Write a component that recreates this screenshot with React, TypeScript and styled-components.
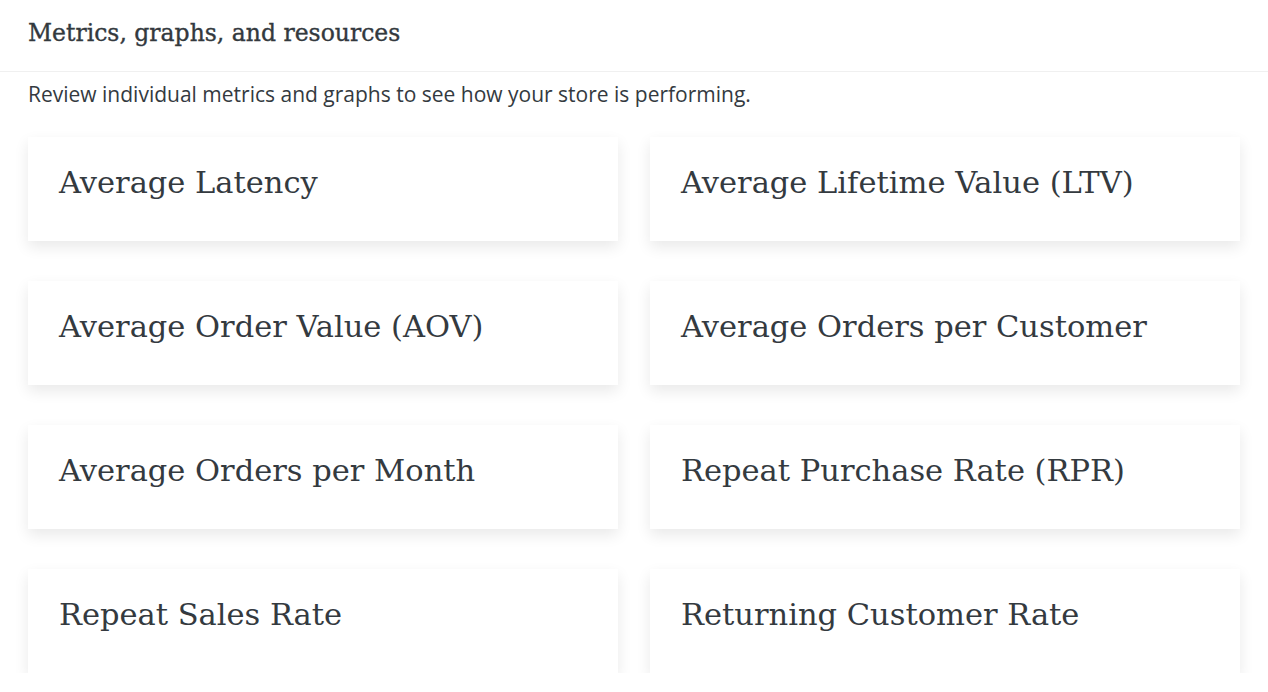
import styled, { createGlobalStyle } from 'styled-components'

const metrics = [
	'Average Latency',
	'Average Lifetime Value (LTV)',
	'Average Order Value (AOV)',
	'Average Orders per Customer',
	'Average Orders per Month',
	'Repeat Purchase Rate (RPR)',
	'Repeat Sales Rate',
	'Returning Customer Rate',
]

export default function App() {
	return (
		<>
			<GlobalStyle />
			<Page>
				<Header>
					<Title>Metrics, graphs, and resources</Title>
				</Header>
				<Content>
					<Intro>Review individual metrics and graphs to see how your store is performing.</Intro>
					<Grid>
						{metrics.map((m) => (
							<Card key={m}>
								<CardTitle>{m}</CardTitle>
							</Card>
						))}
					</Grid>
				</Content>
			</Page>
		</>
	)
}

const GlobalStyle = createGlobalStyle`
	body {
		margin: 0;
		background: #fff;
		color: #343a3f;
	}
`
const Page = styled.div`
	width: 100%;
`
const Header = styled.header`
	height: 72px;
	box-sizing: border-box;
	padding: 0 28px 6px;
	display: flex;
	align-items: center;
	border-bottom: 1px solid #f0f0f0;
`
const Title = styled.h1`
	margin: 0;
	font-family: 'DejaVu Serif', serif;
	font-size: 23.5px;
	font-weight: 400;
	color: #33393e;
	-webkit-text-stroke: 0.35px #33393e;
`
const Content = styled.main`
	padding: 0 28px;
`
const Intro = styled.p`
	margin: 9px 0 0;
	font-family: 'Open Sans', sans-serif;
	font-size: 21px;
	line-height: 26px;
	color: #343a3f;
`
const Grid = styled.div`
	display: grid;
	grid-template-columns: 1fr 1fr;
	column-gap: 32px;
	row-gap: 40px;
	margin-top: 30px;
`
const Card = styled.div`
	height: 104px;
	box-sizing: border-box;
	padding: 24px 32px 24px 31px;
	background: #fff;
	box-shadow: 0 6px 14px rgba(0, 0, 0, 0.09);
`
const CardTitle = styled.h2`
	margin: 0;
	font-family: 'DejaVu Serif', serif;
	font-size: 30.5px;
	font-weight: 400;
	line-height: 44px;
	color: #343a3f;
`
